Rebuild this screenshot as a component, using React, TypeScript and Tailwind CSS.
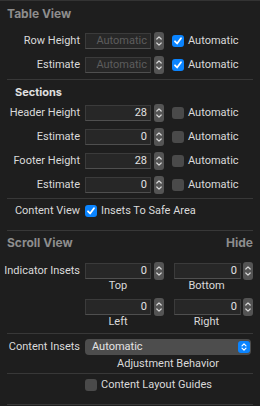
import React from "react";

const Stepper = ({ ml = "ml-[3px]" }: { ml?: string }) => (
  <div className={`${ml} flex h-[18px] w-[10px] shrink-0 flex-col items-center justify-center rounded-[3px] bg-[#545454]`}>
    <svg width="8" height="14" viewBox="0 0 8 14" fill="none" stroke="#d8d8d8" strokeWidth="1.2" strokeLinecap="round" strokeLinejoin="round">
      <path d="M1.8 5 L4 2.8 L6.2 5" />
      <path d="M1.8 9 L4 11.2 L6.2 9" />
    </svg>
  </div>
);

const Field = ({ value, disabled, w = "w-[66px]" }: { value: string; disabled?: boolean; w?: string }) => (
  <div
    className={`${w} h-[16px] shrink-0 border border-[#3b3b3b] border-b-[#4f4f4f] bg-[#272727] pr-[3px] text-right leading-[14px] ${disabled ? "text-[#5d5d5d]" : "text-[#e2e2e2]"}`}
  >
    {value}
  </div>
);

const Check = ({ checked }: { checked?: boolean }) =>
  checked ? (
    <div className="flex h-[12px] w-[12px] shrink-0 items-center justify-center rounded-[3px] bg-[#0a84ff]">
      <svg width="10" height="10" viewBox="0 0 10 10" fill="none" stroke="#fff" strokeWidth="1.8" strokeLinecap="round" strokeLinejoin="round">
        <path d="M2 5.3 L4.1 7.5 L8 2.3" />
      </svg>
    </div>
  ) : (
    <div className="h-[12px] w-[12px] shrink-0 rounded-[3px] bg-[#4a4a4a]" />
  );

const Sep = () => <div className="mx-[7px] h-px shrink-0 bg-[#383838]" />;

const Row = ({ label, children, h = "h-[24px]" }: { label: string; children: React.ReactNode; h?: string }) => (
  <div className={`flex ${h} shrink-0 items-center`}>
    <div className="w-[80px] shrink-0 whitespace-nowrap text-right text-[#dadada]">{label}</div>
    <div className="ml-[5px] flex items-center">{children}</div>
  </div>
);

const AutoRow = ({ label, value, checked, disabled }: { label: string; value: string; checked?: boolean; disabled?: boolean }) => (
  <Row label={label}>
    <Field value={value} disabled={disabled} />
    <Stepper />
    <div className="ml-[8px]">
      <Check checked={checked} />
    </div>
    <span className="ml-[4px] text-[#dadada]">Automatic</span>
  </Row>
);

const InsetRow = () => (
  <Row label="" h="h-[18px]">
    <Field value="0" />
    <Stepper />
    <div className="ml-[10px]">
      <Field value="0" w="w-[67px]" />
    </div>
    <Stepper ml="ml-[2px]" />
  </Row>
);

const head = { fontFamily: "Inter, 'Noto Sans', sans-serif" };

export default function App() {
  return (
    <div
      className="flex h-[406px] w-[260px] flex-col overflow-hidden bg-[#1e1e1e] text-[11px] text-[#dadada]"
      style={{ fontFamily: "Roboto, 'Noto Sans', sans-serif" }}
    >
      <div className="h-px shrink-0 bg-[#333]" />
      {/* Table View */}
      <div style={head} className="flex h-[28px] shrink-0 items-center pb-[3px] pl-[7px] text-[12px] font-bold text-[#8d8d8d]">Table View</div>
      <AutoRow label="Row Height" value="Automatic" checked disabled />
      <AutoRow label="Estimate" value="Automatic" checked disabled />
      <div className="h-[2px] shrink-0" />
      <Sep />
      <div style={head} className="flex h-[21px] shrink-0 items-center pl-[15px] pt-[4px] text-[11px] font-bold text-[#e0e0e0]">Sections</div>
      <AutoRow label="Header Height" value="28" />
      <AutoRow label="Estimate" value="0" />
      <AutoRow label="Footer Height" value="28" />
      <AutoRow label="Estimate" value="0" />
      <div className="h-[1px] shrink-0" />
      <Sep />
      <Row label="Content View">
        <Check checked />
        <span className="ml-[4px]">Insets To Safe Area</span>
      </Row>
      <div className="h-[7px] shrink-0" />
      <Sep />
      <div style={head} className="flex h-[24px] shrink-0 items-center justify-between px-[7px] text-[12px] font-bold text-[#8d8d8d]">
        <span>Scroll View</span>
        <span>Hide</span>
      </div>
      <div className="h-[7px] shrink-0" />
      <Row label="Indicator Insets" h="h-[18px]">
        <Field value="0" />
        <Stepper />
        <div className="ml-[10px]">
          <Field value="0" w="w-[67px]" />
        </div>
        <Stepper ml="ml-[2px]" />
      </Row>
      <div className="ml-[85px] flex h-[18px] shrink-0 items-start leading-[11px]">
        <div className="w-[66px] text-center">Top</div>
        <div className="ml-[22px] w-[67px] text-center">Bottom</div>
      </div>
      <InsetRow />
      <div className="ml-[85px] flex h-[11px] shrink-0 items-start leading-[11px]">
        <div className="w-[66px] text-center">Left</div>
        <div className="ml-[22px] w-[67px] text-center">Right</div>
      </div>
      <div className="h-[6px] shrink-0" />
      <Sep />
      <div className="h-[5px] shrink-0" />
      <div className="flex h-[16px] shrink-0 items-center">
        <div className="w-[80px] shrink-0 text-right">Content Insets</div>
        <div className="ml-[5px] flex h-[16px] w-[166px] items-center justify-between rounded-[4px] bg-[#4d4d4d] pl-[7px] pr-[1px] text-[#e4e4e4]">
          <span>Automatic</span>
          <div className="flex h-[12px] w-[12px] items-center justify-center rounded-[3px] bg-[#0a84ff]">
            <svg width="8" height="10" viewBox="0 0 8 10" fill="none" stroke="#fff" strokeWidth="1.2" strokeLinecap="round" strokeLinejoin="round">
              <path d="M2 3.8 L4 1.8 L6 3.8" />
              <path d="M2 6.2 L4 8.2 L6 6.2" />
            </svg>
          </div>
        </div>
      </div>
      <div className="h-[3px] shrink-0" />
      <div className="ml-[85px] flex h-[11px] w-[166px] shrink-0 items-start justify-center leading-[11px]">Adjustment Behavior</div>
      <div className="h-[4px] shrink-0" />
      <Sep />
      <div className="h-[5px] shrink-0" />
      <div className="flex h-[12px] shrink-0 items-center pl-[85px]">
        <Check />
        <span className="ml-[4px]">Content Layout Guides</span>
      </div>
      <div className="h-[13px] shrink-0" />
      <Sep />
    </div>
  );
}
